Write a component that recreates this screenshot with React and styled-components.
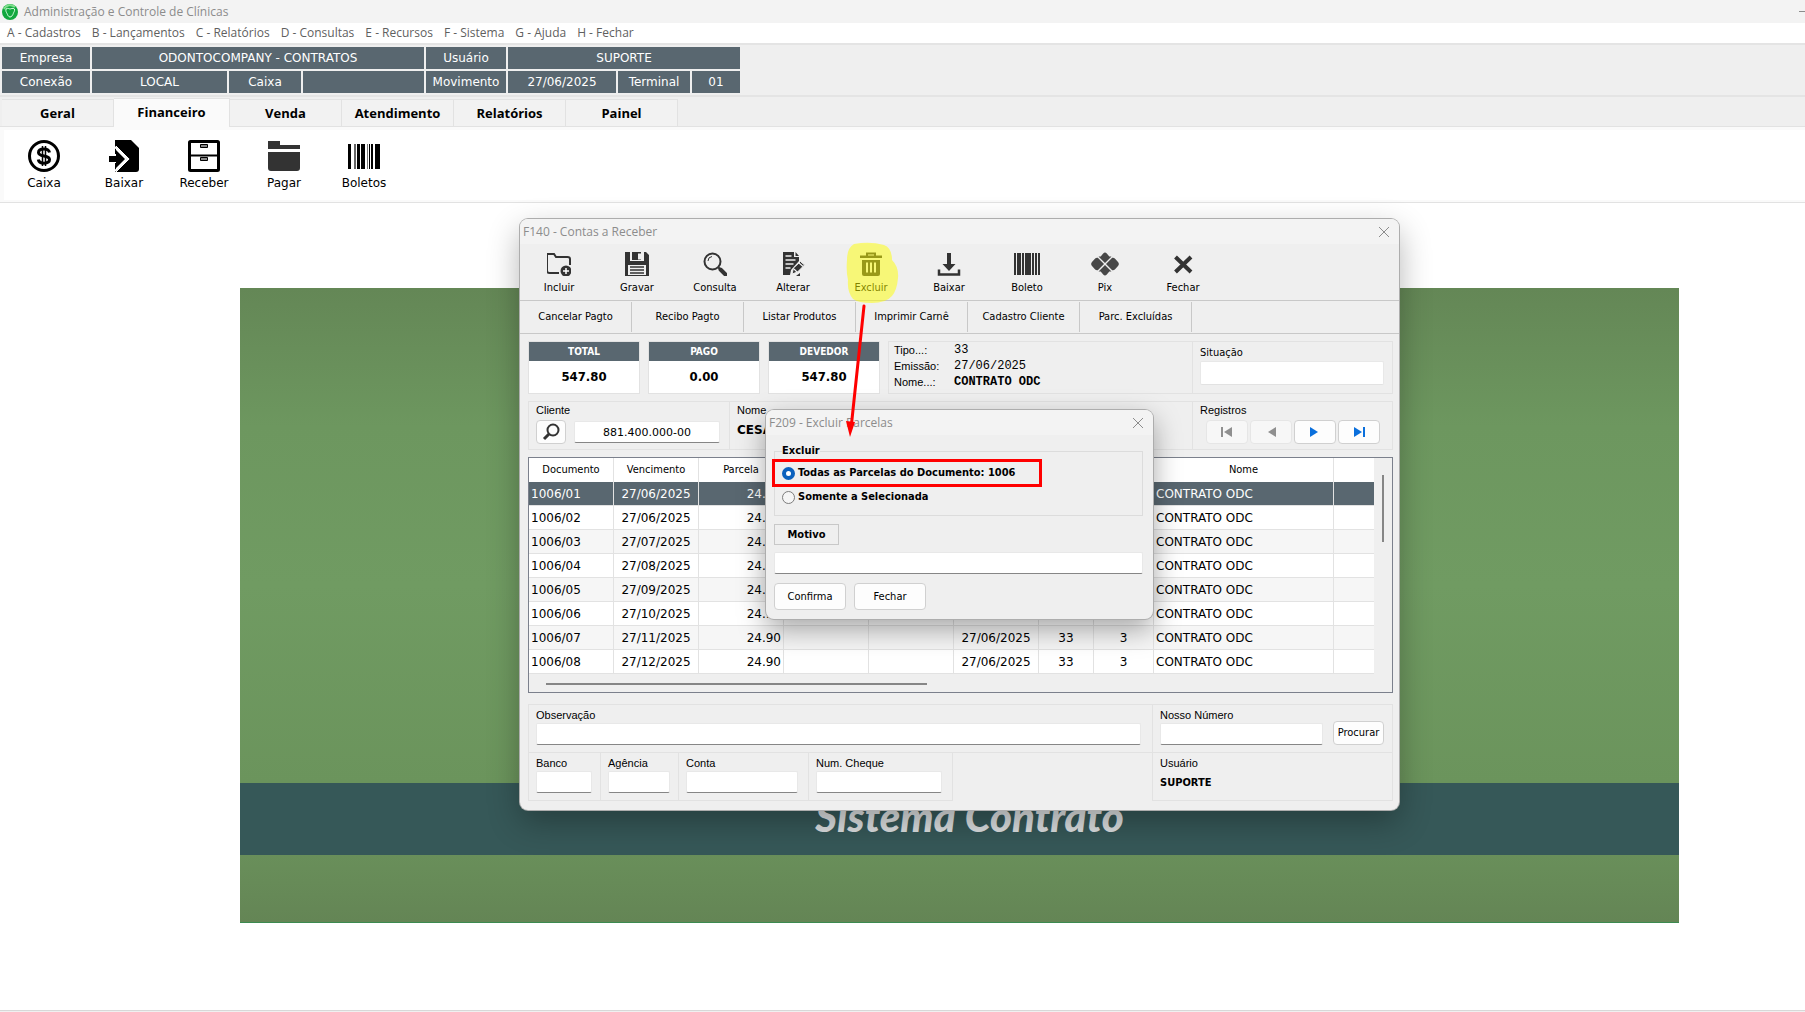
import React from 'react';
import styled, { createGlobalStyle } from 'styled-components';

const GlobalStyle = createGlobalStyle`
  :root {
    --font-ui: "DejaVu Sans Condensed", "Noto Sans", sans-serif;
    --font-wide: "DejaVu Sans", Verdana, sans-serif;
    --font-title: "Open Sans", "Segoe UI", sans-serif;
    --font-label: "Liberation Sans", Arial, sans-serif;
    --font-mono: "Liberation Mono", "Courier New", monospace;
    --color-slate: #596770;
    --color-face: #efefef;
    --color-line: #e2e2e2;
    --color-edge: #c8c8c8;
    --color-title: #8c8c8c;
    --color-icon: #333;
  }
  * {
    box-sizing: border-box;
  }
  body {
    margin: 0;
    background: #fff;
    color: #000;
    font: 11px/14px var(--font-ui);
  }
  button, input {
    font: inherit;
    color: inherit;
  }
`;

const Page = styled.div`
  display: flex;
  flex-direction: column;
  min-height: 100vh;
  overflow: hidden;
`;

const TitleBar = styled.header`
  display: flex;
  align-items: center;
  gap: 6px;
  height: 23px;
  padding-left: 2px;
  background: #f3f3f3;
  color: var(--color-title);
  font: 12px/16px var(--font-title);
`;

const Minimize = styled.button`
  width: 6px;
  height: 1px;
  margin-left: auto;
  padding: 0;
  border: 0;
  background: #8c8c8c;
`;

const MenuBar = styled.nav`
  display: flex;
  gap: 11px;
  height: 18px;
  padding-left: 7px;
  background: #fff;
`;

const MenuLink = styled.a`
  color: #5f5f5f;
  font: 12px/20px var(--font-title);
  text-decoration: none;
`;

const Status = styled.section`
  display: flex;
  flex-direction: column;
  gap: 2px;
  height: 54px;
  padding: 2px;
  border-top: 2px solid #e4e4e4;
  border-bottom: 2px solid #e4e4e4;
  margin-top: 2px;
  background: var(--color-face);
`;

const StatusRow = styled.div`
  display: flex;
  gap: 2px;
`;

const StatusCell = styled.div`
  width: ${({ $width }) => $width}px;
  height: 22px;
  background: var(--color-slate);
  color: #fff;
  font: 12px/23px var(--font-wide);
  text-align: center;
`;

const Tabs = styled.div`
  display: flex;
  align-items: flex-end;
  height: 30px;
  padding-left: 2px;
  border-bottom: 1px solid var(--color-line);
  background: var(--color-face);
`;

const Tab = styled.button`
  width: ${({ $active }) => ($active ? 116 : 112)}px;
  height: ${({ $active }) => ($active ? 29 : 27)}px;
  margin-bottom: ${({ $active }) => ($active ? -1 : 0)}px;
  padding: 0 0 ${({ $active }) => ($active ? 2 : 0)}px;
  border: 1px solid var(--color-line);
  border-width: 1px 1px 0 0;
  background: ${({ $active }) => ($active ? '#fafafa' : '#f2f2f2')};
  font: bold 13px/18px var(--font-title);
`;

const Ribbon = styled.div`
  display: flex;
  height: 75px;
  padding-top: 10px;
  border: 3px solid #fafafa;
  border-width: 3px 0 2px 4px;
  background: #fff;
  box-shadow: 0 1px var(--color-line);
`;

const RibbonButton = styled.button`
  display: flex;
  flex-direction: column;
  align-items: center;
  gap: 4px;
  width: 80px;
  height: 50px;
  padding: 0;
  border: 0;
  background: none;
  font: 12px/14px var(--font-wide);
`;

const Desktop = styled.main`
  position: relative;
  display: flex;
  flex: 1;
  min-height: 700px;
  padding: 86px 126px 87px 240px;
`;

const Wallpaper = styled.div`
  display: grid;
  grid-template-rows: 1fr 72px 67px;
  flex: 1;
  border-bottom: 1px solid #3c8a50;
`;

const Field = styled.div`
  background: linear-gradient(#648756, #6d975f 28%, #709b62 60%, #6b945c);
`;

const Stripe = styled.div`
  padding-left: 20px;
  background: #365858;
  color: #dcdfe0;
  font: italic 900 42px/66px Lato, sans-serif;
  text-align: center;
`;

const Floor = styled.div`
  background: linear-gradient(#698f5a, #648555);
`;

const Bottom = styled.footer`
  height: 2px;
  border-top: 1px solid #d8d8d8;
  background: #f0f0f0;
`;

const Window = styled.section`
  position: absolute;
  top: ${({ $top }) => $top}px;
  left: ${({ $left }) => $left}px;
  width: ${({ $width }) => $width}px;
  border-radius: 8px;
  background: var(--color-face);
  box-shadow: 0 0 0 1px #adadad, ${({ $shadow }) => $shadow};
`;

const WindowTitle = styled.header`
  display: flex;
  align-items: center;
  justify-content: space-between;
  height: 25px;
  padding: 0 9px 0 3px;
  border-radius: 8px 8px 0 0;
  background: #f3f3f3;
  color: var(--color-title);
  font: 12px/16px var(--font-title);
`;

const IconButton = styled.button`
  display: flex;
  padding: 0;
  border: 0;
  background: none;
`;

const Toolbar = styled.div`
  display: flex;
  height: 57px;
  border-bottom: 1px solid var(--color-edge);
`;

const Tool = styled.button`
  position: relative;
  display: flex;
  flex-direction: column;
  align-items: center;
  gap: 5px;
  width: 78px;
  padding: 8px 0 0;
  border: 0;
  background: none;
  color: var(--color-icon);
`;

const ToolName = styled.span`
  color: #000;
`;

const Marker = styled.svg`
  position: absolute;
  top: -2px;
  left: 14px;
`;

const Actions = styled.div`
  display: flex;
  height: 33px;
  padding: 1px 0;
  border-bottom: 1px solid var(--color-edge);
`;

const Action = styled.button`
  width: 112px;
  padding: 0;
  border: 0;
  border-right: 1px solid var(--color-edge);
  background: none;
`;

const Body = styled.div`
  display: flex;
  flex-direction: column;
  gap: 7px;
  padding: 7px 6px 9px 8px;
`;

const Summary = styled.div`
  display: flex;
  gap: 8px;
  height: 53px;
`;

const SumCard = styled.div`
  width: 112px;
  border: 1px solid var(--color-line);
  background: #fff;
  font: bold 13px/32px var(--font-ui);
  text-align: center;
`;

const SumTitle = styled.div`
  background: var(--color-slate);
  color: #fff;
  font: bold 10px/19px var(--font-ui);
`;

const Panels = styled.div`
  display: grid;
  grid-template-columns: ${({ $columns }) => $columns};
  flex: 1;
  min-height: 49px;
  border: 1px solid var(--color-line);
`;

const Panel = styled.div`
  padding: ${({ $top }) => $top || 1}px 8px 0 7px;
  border-left: 1px solid var(--color-line);
  &:first-child {
    border-left: 0;
  }
`;

const Facts = styled.dl`
  display: grid;
  grid-template-columns: 60px 1fr;
  grid-auto-rows: 16px;
  margin: 0;
  padding-left: 5px;
  line-height: 16px;
`;

const FactName = styled.dt`
  font-family: var(--font-label);
`;

const FactValue = styled.dd`
  margin: 0;
  font-family: var(--font-mono);
  font-size: 12px;
  font-weight: ${({ $bold }) => ($bold ? 'bold' : 'normal')};
`;

const Label = styled.label`
  display: block;
  height: 15px;
  font: 11px/14px ${({ $ui }) => ($ui ? 'var(--font-ui)' : 'var(--font-label)')};
`;

const Input = styled.input`
  display: block;
  width: ${({ $width }) => ($width ? `${$width}px` : '100%')};
  height: ${({ $flat }) => ($flat ? 24 : 22)}px;
  padding: 0;
  border: 1px solid #e8e8e8;
  border-bottom: ${({ $flat }) => ($flat ? '1px solid #e2e2e2' : '1px solid #868686')};
  border-radius: 2px;
  background: #fff;
  font-family: var(--font-wide);
  text-align: center;
`;

const Line = styled.div`
  display: flex;
  align-items: center;
  gap: ${({ $gap }) => $gap}px;
  padding-top: 2px;
  padding-left: ${({ $indent }) => $indent || 0}px;
`;

const Button = styled.button`
  display: flex;
  align-items: center;
  justify-content: center;
  width: ${({ $width }) => $width}px;
  height: ${({ $height }) => $height || 24}px;
  padding: 0;
  border: 1px solid #d0d0d0;
  border-radius: 4px;
  background: #fdfdfd;
  &:disabled {
    border-color: #e6e6e6;
    background: #f7f7f7;
  }
`;

const Name = styled.div`
  padding-top: 4px;
  font: bold 12px/16px var(--font-wide);
`;

const GridFrame = styled.div`
  display: grid;
  grid-template-columns: 1fr 18px;
  grid-template-rows: 217px 17px;
  border: 1px solid #7b808c;
`;

const Table = styled.table`
  align-self: start;
  width: 100%;
  border-collapse: separate;
  border-spacing: 0;
  table-layout: fixed;
  background: #fff;
  font-size: 11px;
`;

const Th = styled.th`
  width: ${({ $width }) => ($width ? `${$width}px` : 'auto')};
  height: 24px;
  padding: 0;
  border-right: 1px solid var(--color-line);
  font-weight: normal;
  &:last-child {
    border-right: 0;
  }
`;

const Row = styled.tr`
  background: ${({ $selected, $odd }) => ($selected ? 'var(--color-slate)' : $odd ? '#f6f6f6' : '#fff')};
  color: ${({ $selected }) => ($selected ? '#fff' : '#000')};
`;

const Td = styled.td`
  height: 24px;
  padding: 0 2px;
  border-right: 1px solid var(--color-line);
  border-bottom: 1px solid var(--color-line);
  font: 12px/16px var(--font-wide);
  text-align: ${({ $align }) => $align || 'left'};
  white-space: nowrap;
  &:last-child {
    border-right: 0;
  }
`;

const ScrollY = styled.div`
  width: 2px;
  height: 67px;
  margin: 17px 0 0 8px;
  background: #868686;
`;

const ScrollX = styled.div`
  width: 381px;
  height: 2px;
  margin: 8px 0 0 17px;
  background: #868686;
`;

const Footer = styled.div`
  display: grid;
  grid-template-columns: 624px 1fr;
  margin-top: 4px;
`;

const FooterBox = styled.div`
  height: ${({ $last }) => ($last ? 49 : 48)}px;
  padding: 3px ${({ $pad }) => $pad || 8}px 0 7px;
  border: 1px solid var(--color-line);
  border-width: ${({ $last }) => ($last ? '1px 1px 1px 0' : '1px 0 0 1px')};
  &:first-child {
    border-left: 1px solid var(--color-line);
  }
`;

const FooterSide = styled.div`
  height: ${({ $last }) => ($last ? 49 : 48)}px;
  padding: 3px 8px 0 7px;
  border: 1px solid var(--color-line);
  border-width: 1px 1px ${({ $last }) => ($last ? 1 : 0)}px 1px;
`;

const BankRow = styled.div`
  display: grid;
  grid-template-columns: 73px 78px 130px 144px 1fr;
`;

const BankRest = styled.div`
  border-top: 1px solid var(--color-line);
`;

const Search = styled.div`
  display: flex;
  align-items: flex-end;
  justify-content: space-between;
`;

const Strong = styled.div`
  padding-top: 5px;
  font-weight: bold;
`;

const Dialog = styled.form`
  display: flex;
  flex-direction: column;
  align-items: flex-start;
  padding: 8px 10px 9px 8px;
`;

const Group = styled.fieldset`
  width: 100%;
  height: 73px;
  margin: 0 0 8px;
  padding: 2px 7px 0;
  border: 1px solid #dcdcdc;
  font-weight: bold;
`;

const Legend = styled.legend`
  padding: 0;
  line-height: 16px;
`;

const Option = styled.label`
  position: relative;
  display: flex;
  align-items: center;
  gap: 3px;
  height: 24px;
`;

const Radio = styled.input`
  appearance: none;
  width: 13px;
  height: 13px;
  margin: 0;
  border: 1px solid #7c7c7c;
  border-radius: 50%;
  background: #f5f5f5;
  &:checked {
    border: 4px solid #0a61bd;
    background: #fff;
  }
`;

const RedBox = styled.span`
  position: absolute;
  top: -2px;
  left: -10px;
  width: 270px;
  height: 28px;
  border: 3px solid #f00;
`;

const Reason = styled.label`
  width: 65px;
  height: 21px;
  margin-bottom: 7px;
  border: 1px solid var(--color-edge);
  font-weight: bold;
  line-height: 19px;
  text-align: center;
`;

const DialogButtons = styled.div`
  display: flex;
  gap: 8px;
  padding-top: 9px;
`;

const Arrow = styled.svg`
  position: absolute;
  top: 100px;
  left: 840px;
`;

const Svg = ({ size = 24, children }) => (
  <svg width={size} height={size} viewBox="0 0 24 24" fill="currentColor" aria-hidden="true">
    {children}
  </svg>
);

const Bars = ({ width, height, bars, top, length }) => (
  <svg width={width} height={height} viewBox={`0 0 ${width} ${height}`} aria-hidden="true">
    {bars.map(([x, w, color = '#000']) => (
      <rect key={x} x={x} y={top} width={w} height={length} fill={color} />
    ))}
  </svg>
);

const CloseIcon = () => (
  <svg width="12" height="12" viewBox="0 0 12 12" stroke="#8c8c8c" aria-hidden="true">
    <path d="M1 1l10 10M11 1L1 11" />
  </svg>
);

const Logo = () => (
  <svg width="16" height="16" viewBox="0 0 16 16" aria-hidden="true">
    <circle cx="8" cy="8" r="8" fill="#12a83f" />
    <path d="M2 5a7 7 0 0 1 11-2" stroke="#7fe08d" strokeWidth="2" fill="none" />
    <path d="M4 5c2-1.500 3 0 4 0s2.500-1.500 4.500 0c.5 2-.8 3-1.200 4.500S9.500 13 8 13s-2.300-2-3-3.500S3.500 7 4 5z" fill="#12a83f" stroke="#d8ffe0" />
  </svg>
);

const ribbon = [
  {
    name: 'Caixa',
    icon: (
      <svg width="32" height="32" viewBox="0 0 32 32" fill="none" stroke="#000" aria-hidden="true">
        <circle cx="16" cy="16" r="14.500" strokeWidth="3" />
        <path d="M21.500 12.500c-.5-2.500-2.500-3.500-5.500-3.500s-5.500 1.200-5.500 3.600c0 5 11 2 11 7 0 2.400-2.500 3.600-5.500 3.600s-5.300-1.200-5.700-3.700" strokeWidth="3" />
        <path d="M14.500 6v20M17.500 6v20" strokeWidth="1.500" />
      </svg>
    ),
  },
  {
    name: 'Baixar',
    icon: (
      <svg width="32" height="32" viewBox="0 0 32 32" aria-hidden="true">
        <path d="M7 0h16l8 8v21q0 3-3 3H7z" />
        <path d="M7 7l13 12L7 31" fill="none" stroke="#fff" strokeWidth="2" />
        <path d="M0 14h8V7l11 12L8 30v-7H0z" fill="#fff" />
        <path d="M1 16h7V10l9 9-9 9v-6H1z" />
        <path d="M8 6l13 13L8 32" fill="none" stroke="#fff" strokeWidth="1" />
      </svg>
    ),
  },
  {
    name: 'Receber',
    icon: (
      <svg width="32" height="32" viewBox="0 0 32 32" fill="none" stroke="#000" aria-hidden="true">
        <rect x="1.500" y="1.500" width="29" height="29" rx="1" strokeWidth="3" />
        <path d="M1 15.500h30" strokeWidth="2" />
        <path d="M12.500 4.500h7v3h-7zM12.500 17.500h7v3h-7z" strokeWidth="1" fill="#888" />
      </svg>
    ),
  },
  {
    name: 'Pagar',
    icon: (
      <svg width="32" height="32" viewBox="0 0 32 32" fill="#333" aria-hidden="true">
        <path d="M0 1h12v4h20v4H0zM0 12h32v16q0 3-3 3H3q-3 0-3-3z" />
      </svg>
    ),
  },
  {
    name: 'Boletos',
    icon: (
      <Bars
        width={32}
        height={32}
        top={4}
        length={25}
        bars={[[0, 3], [6, 2, '#666'], [9, 3], [13, 4], [19, 1, '#777'], [21, 1], [23, 2], [27, 5]]}
      />
    ),
  },
];

const tools = [
  {
    name: 'Incluir',
    icon: (
      <Svg>
        <path d="M12 21H2.500Q0 21 0 18.500V2h7l2 3h11.500Q23 5 23 7v6" fill="none" stroke="currentColor" strokeWidth="2" />
        <circle cx="19" cy="19" r="5.500" />
        <path d="M19 16v6M16 19h6" stroke="#fff" strokeWidth="1.500" />
      </Svg>
    ),
  },
  {
    name: 'Gravar',
    icon: (
      <Svg>
        <path d="M0 0h5v9h14V0h2l3 3v21H0z" />
        <path d="M7 0h9v8H7z" />
        <path d="M13 1.500h3v6h-3z" fill="#efefef" />
        <path d="M3 13h18v10H3z" fill="#efefef" />
        <path d="M5 15h14M5 18h14M5 21h14" stroke="currentColor" strokeWidth="1.500" />
      </Svg>
    ),
  },
  {
    name: 'Consulta',
    icon: (
      <Svg>
        <circle cx="9.500" cy="9.500" r="8" fill="none" stroke="currentColor" strokeWidth="2" />
        <path d="M5 9q0-4 4-4.500" fill="none" stroke="currentColor" />
        <path d="M15.500 15.500l2 2" stroke="currentColor" strokeWidth="2" />
        <path d="M17.500 17.500l5 5" stroke="currentColor" strokeWidth="4" strokeLinecap="round" />
      </Svg>
    ),
  },
  {
    name: 'Alterar',
    icon: (
      <Svg>
        <path d="M2 0h11v5h5v4l-8 9-1 5H2z" />
        <path d="M14.500 0L18 4h-3.500z" />
        <path d="M4.500 4h6M4.500 8h10M4.500 12h8M4.500 16h5" stroke="#efefef" strokeWidth="1.500" />
        <path d="M11 22l1.500-6 7-6.500 4 3.500-7 7z" stroke="#efefef" />
        <path d="M13 17l3.500 3.500M18 11l4 3.500" stroke="#efefef" strokeWidth="1.200" />
        <path d="M15 24h4v-3z" />
      </Svg>
    ),
  },
  {
    name: 'Excluir',
    marked: true,
    icon: (
      <Svg>
        <path d="M1 3.500h22V6H1z" />
        <path d="M8 4V1.500h8V4" fill="none" stroke="currentColor" strokeWidth="2" />
        <path d="M3 8h18v14q0 2-2 2H5q-2 0-2-2z" />
        <path d="M8 10.500v10M12 10.500v10M16 10.500v10" stroke="#efefef" strokeWidth="2" />
      </Svg>
    ),
  },
  {
    name: 'Baixar',
    icon: (
      <Svg>
        <path d="M10 1h4v11h4.500L12 19l-6.500-7H10z" />
        <path d="M2 17.500v5h20v-5" fill="none" stroke="currentColor" strokeWidth="2.500" />
      </Svg>
    ),
  },
  {
    name: 'Boleto',
    icon: (
      <Bars
        width={26}
        height={24}
        top={1}
        length={22}
        bars={[[0, 2, '#333'], [3, 4, '#333'], [8, 2, '#333'], [11, 6, '#333'], [18, 2, '#333'], [21, 2, '#333'], [24, 2, '#333']]}
      />
    ),
  },
  {
    name: 'Pix',
    icon: (
      <svg width="28" height="24" viewBox="0 1 28 24" fill="#484848" aria-hidden="true">
        <path d="M14 12L7.500 5.500h2.200l2.500-3Q14 .4 15.800 2.500l2.500 3h2.200z" />
        <path d="M14 14l-6.500 6.500h2.200l2.500 3q1.800 2.100 3.600 0l2.500-3h2.200z" />
        <path d="M13 13L6.800 6.800Q5 6.500 3.700 8L1 11q-1.700 2 0 4l2.700 3q1.300 1.500 3.100 1.200z" />
        <path d="M15 13l6.200-6.200q1.800-.3 3.100 1.200L27 11q1.700 2 0 4l-2.700 3q-1.300 1.500-3.100 1.200z" />
      </svg>
    ),
  },
  {
    name: 'Fechar',
    icon: (
      <Svg>
        <path d="M4.500 5L20 20M20 5L4.500 20" stroke="currentColor" strokeWidth="4" />
      </Svg>
    ),
  },
];

const navigation = [
  { name: 'Primeiro', disabled: true, first: true },
  { name: 'Anterior', disabled: true },
  { name: 'Próximo', forward: true },
  { name: 'Último', forward: true, first: true },
];

const NavIcon = ({ forward, first }) => (
  <svg width="12" height="10" viewBox="0 0 12 10" fill={forward ? '#0a6fdc' : '#8f8f8f'} aria-hidden="true">
    {forward ? <path d="M1 0l8 5-8 5z" /> : <path d="M11 0L3 5l8 5z" />}
    {first && <path d={forward ? 'M10 0h2v10h-2z' : 'M0 0h2v10H0z'} />}
  </svg>
);

const rows = [
  ['1006/01', '27/06/2025'],
  ['1006/02', '27/06/2025'],
  ['1006/03', '27/07/2025'],
  ['1006/04', '27/08/2025'],
  ['1006/05', '27/09/2025'],
  ['1006/06', '27/10/2025'],
  ['1006/07', '27/11/2025'],
  ['1006/08', '27/12/2025'],
];

const menu = [
  'A - Cadastros',
  'B - Lançamentos',
  'C - Relatórios',
  'D - Consultas',
  'E - Recursos',
  'F - Sistema',
  'G - Ajuda',
  'H - Fechar',
];

const Installments = () => (
  <GridFrame>
    <Table>
      <thead>
        <tr>
          <Th $width={85}>Documento</Th>
          <Th $width={85}>Vencimento</Th>
          <Th $width={85}>Parcela</Th>
          <Th $width={85} />
          <Th $width={85} />
          <Th $width={85} />
          <Th $width={55} />
          <Th $width={60} />
          <Th $width={180}>Nome</Th>
          <Th />
        </tr>
      </thead>
      <tbody>
        {rows.map(([doc, due], i) => (
          <Row key={doc} $selected={i === 0} $odd={i % 2 === 0}>
            <Td>{doc}</Td>
            <Td $align="center">{due}</Td>
            <Td $align="right">24.90</Td>
            <Td />
            <Td />
            <Td $align="center">27/06/2025</Td>
            <Td $align="center">33</Td>
            <Td $align="center">3</Td>
            <Td>CONTRATO ODC</Td>
            <Td />
          </Row>
        ))}
      </tbody>
    </Table>
    <ScrollY />
    <ScrollX />
  </GridFrame>
);

const Receivables = () => (
  <Window $top={17} $left={520} $width={879} $shadow="0 12px 32px rgba(0, 0, 0, 0.3)">
    <WindowTitle>
      F140 - Contas a Receber
      <IconButton aria-label="Fechar janela"><CloseIcon /></IconButton>
    </WindowTitle>
    <Toolbar>
      {tools.map(({ name, icon, marked }) => (
        <Tool key={name}>
          {icon}
          <ToolName>{name}</ToolName>
          {marked && (
            <Marker width="54" height="62" viewBox="0 0 54 62" aria-hidden="true">
              <path
                d="M8 2Q24-1 38 3q8 3 8 15 7 7 6 18-1 12-6 18-6 7-20 7T7 57Q1 50 2 38q-2-8-1-20Q1 6 8 2z"
                fill="#ff0"
                fillOpacity="0.5"
              />
            </Marker>
          )}
        </Tool>
      ))}
    </Toolbar>
    <Actions>
      <Action>Cancelar Pagto</Action>
      <Action>Recibo Pagto</Action>
      <Action>Listar Produtos</Action>
      <Action>Imprimir Carnê</Action>
      <Action>Cadastro Cliente</Action>
      <Action>Parc. Excluídas</Action>
    </Actions>
    <Body>
      <Summary>
        <SumCard><SumTitle>TOTAL</SumTitle>547.80</SumCard>
        <SumCard><SumTitle>PAGO</SumTitle>0.00</SumCard>
        <SumCard><SumTitle>DEVEDOR</SumTitle>547.80</SumCard>
        <Panels $columns="1fr 200px">
          <Facts>
            <FactName>Tipo...:</FactName>
            <FactValue>33</FactValue>
            <FactName>Emissão:</FactName>
            <FactValue>27/06/2025</FactValue>
            <FactName>Nome...:</FactName>
            <FactValue $bold>CONTRATO ODC</FactValue>
          </Facts>
          <Panel $top={4}>
            <Label $ui htmlFor="situacao">Situação</Label>
            <Input id="situacao" $flat />
          </Panel>
        </Panels>
      </Summary>
      <Panels $columns="200px 1fr 200px">
        <Panel>
          <Label htmlFor="cliente">Cliente</Label>
          <Line $gap={8}>
            <Button $width={30} aria-label="Procurar cliente">
              <svg width="18" height="18" viewBox="0 0 18 18" fill="none" stroke="#333" aria-hidden="true">
                <circle cx="11" cy="7" r="5.500" strokeWidth="2" />
                <path d="M7 11l-5 5" strokeWidth="3" />
              </svg>
            </Button>
            <Input id="cliente" $width={146} defaultValue="881.400.000-00" />
          </Line>
        </Panel>
        <Panel>
          <Label as="div">Nome</Label>
          <Name>CESA</Name>
        </Panel>
        <Panel>
          <Label as="div">Registros</Label>
          <Line $gap={2} $indent={6}>
            {navigation.map((item) => (
              <Button key={item.name} $width={42} disabled={item.disabled} aria-label={item.name}>
                <NavIcon {...item} />
              </Button>
            ))}
          </Line>
        </Panel>
      </Panels>
      <Installments />
      <Footer>
        <FooterBox $pad={11}>
          <Label htmlFor="observacao">Observação</Label>
          <Input id="observacao" />
        </FooterBox>
        <FooterSide>
          <Search>
            <div>
              <Label htmlFor="nosso-numero">Nosso Número</Label>
              <Input id="nosso-numero" $width={163} />
            </div>
            <Button type="button" $width={51}>Procurar</Button>
          </Search>
        </FooterSide>
        <BankRow>
          <FooterBox $last>
            <Label htmlFor="banco">Banco</Label>
            <Input id="banco" />
          </FooterBox>
          <FooterBox $last>
            <Label htmlFor="agencia">Agência</Label>
            <Input id="agencia" />
          </FooterBox>
          <FooterBox $last $pad={10}>
            <Label htmlFor="conta">Conta</Label>
            <Input id="conta" />
          </FooterBox>
          <FooterBox $last $pad={10}>
            <Label htmlFor="cheque">Num. Cheque</Label>
            <Input id="cheque" />
          </FooterBox>
          <BankRest />
        </BankRow>
        <FooterSide $last>
          <Label as="div">Usuário</Label>
          <Strong>SUPORTE</Strong>
        </FooterSide>
      </Footer>
    </Body>
  </Window>
);

const DeleteDialog = () => (
  <Window $top={208} $left={766} $width={387} $shadow="0 10px 28px rgba(0, 0, 0, 0.36)">
    <WindowTitle>
      F209 - Excluir Parcelas
      <IconButton aria-label="Fechar janela"><CloseIcon /></IconButton>
    </WindowTitle>
    <Dialog onSubmit={(e) => e.preventDefault()}>
      <Group>
        <Legend>Excluir</Legend>
        <Option>
          <Radio type="radio" name="alvo" defaultChecked />
          Todas as Parcelas do Documento: 1006
          <RedBox />
        </Option>
        <Option>
          <Radio type="radio" name="alvo" />
          Somente a Selecionada
        </Option>
      </Group>
      <Reason htmlFor="motivo">Motivo</Reason>
      <Input id="motivo" />
      <DialogButtons>
        <Button type="submit" $width={72} $height={27}>Confirma</Button>
        <Button type="button" $width={72} $height={27}>Fechar</Button>
      </DialogButtons>
    </Dialog>
  </Window>
);

const App = () => (
  <Page>
    <GlobalStyle />
    <TitleBar>
      <Logo />
      Administração e Controle de Clínicas
      <Minimize aria-label="Minimizar" />
    </TitleBar>
    <MenuBar>
      {menu.map((item) => (
        <MenuLink key={item} href="#">{item}</MenuLink>
      ))}
    </MenuBar>
    <Status>
      <StatusRow>
        <StatusCell $width={88}>Empresa</StatusCell>
        <StatusCell $width={332}>ODONTOCOMPANY - CONTRATOS</StatusCell>
        <StatusCell $width={80}>Usuário</StatusCell>
        <StatusCell $width={232}>SUPORTE</StatusCell>
      </StatusRow>
      <StatusRow>
        <StatusCell $width={88}>Conexão</StatusCell>
        <StatusCell $width={135}>LOCAL</StatusCell>
        <StatusCell $width={72}>Caixa</StatusCell>
        <StatusCell $width={121} />
        <StatusCell $width={80}>Movimento</StatusCell>
        <StatusCell $width={108}>27/06/2025</StatusCell>
        <StatusCell $width={72}>Terminal</StatusCell>
        <StatusCell $width={48}>01</StatusCell>
      </StatusRow>
    </Status>
    <Tabs>
      <Tab>Geral</Tab>
      <Tab $active>Financeiro</Tab>
      <Tab>Venda</Tab>
      <Tab>Atendimento</Tab>
      <Tab>Relatórios</Tab>
      <Tab>Painel</Tab>
    </Tabs>
    <Ribbon>
      {ribbon.map(({ name, icon }) => (
        <RibbonButton key={name}>
          {icon}
          {name}
        </RibbonButton>
      ))}
    </Ribbon>
    <Desktop>
      <Wallpaper>
        <Field />
        <Stripe>Sistema Contrato</Stripe>
        <Floor />
      </Wallpaper>
      <Receivables />
      <DeleteDialog />
      <Arrow width="30" height="140" viewBox="0 0 30 140" aria-hidden="true">
        <path d="M24 4L11.500 122" stroke="#f00" strokeWidth="3" strokeLinecap="round" />
        <path d="M6 119l9 1-5 15z" fill="#f00" />
      </Arrow>
    </Desktop>
    <Bottom />
  </Page>
);

export default App;
